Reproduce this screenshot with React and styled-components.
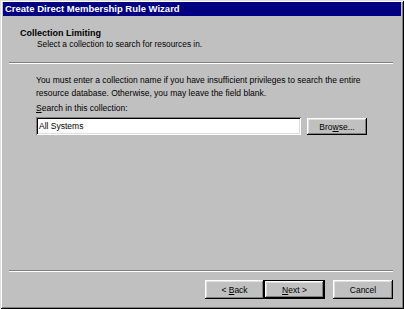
import React from "react";
import styled, { createGlobalStyle } from "styled-components";

const GlobalStyle = createGlobalStyle`
  html, body {
    margin: 0;
    padding: 0;
    background: #c0c0c0;
  }
  body {
    font-family: "Liberation Sans", Arial, sans-serif;
    font-size: 8.5px;
    color: #000;
  }
`;

const Window = styled.div`
  box-sizing: border-box;
  width: 404px;
  height: 309px;
  display: flex;
  flex-direction: column;
  background: #c0c0c0;
  padding: 2px 3px 3px 3px;
  box-shadow: inset 1px 1px #dfdfdf, inset -1px -1px #000,
    inset 2px 2px #fff, inset -2px -2px #808080;
`;

const TitleBar = styled.div`
  height: 14px;
  background: #000080;
  color: #fff;
  font-weight: bold;
  font-size: 9.5px;
  line-height: 14px;
  padding-left: 2px;
  white-space: nowrap;
`;

const Header = styled.div`
  height: 46px;
  box-sizing: border-box;
  padding: 12px 0 0 17px;
`;

const HeaderTitle = styled.div`
  font-weight: bold;
  font-size: 9px;
  line-height: 11px;
`;

const HeaderSub = styled.div`
  font-size: 8.3px;
  line-height: 11px;
  padding-left: 17px;
`;

const Etched = styled.div`
  height: 0;
  margin: 0 8px 0 6px;
  border-top: 1px solid #808080;
  border-bottom: 1px solid #fff;
`;

const Body = styled.div`
  flex: 1;
  padding: 10px 33px 0 33px;
`;

const Para = styled.p`
  margin: 0;
  line-height: 13px;
`;

const Label = styled.div`
  margin-top: 2px;
  line-height: 13px;
`;

const FieldRow = styled.div`
  display: flex;
  align-items: flex-start;
  gap: 6px;
  margin-top: 2px;
`;

const TextBox = styled.div`
  box-sizing: border-box;
  width: 265px;
  height: 18px;
  background: #fff;
  padding: 0 3px;
  line-height: 18px;
  box-shadow: inset 1px 1px #808080, inset -1px -1px #fff,
    inset 2px 2px #000, inset -2px -2px #dfdfdf;
`;

const Button = styled.button`
  box-sizing: border-box;
  width: ${(p) => p.w || 60}px;
  height: ${(p) => p.h || 19}px;
  margin-top: ${(p) => p.mt || 0}px;
  padding: 0;
  border: ${(p) => (p.primary ? "1px solid #000" : "none")};
  background: #c0c0c0;
  font-family: "Liberation Sans", Arial, sans-serif;
  font-size: 8.5px;
  color: #000;
  box-shadow: inset -1px -1px #000, inset 1px 1px #fff,
    inset -2px -2px #808080, inset 2px 2px #dfdfdf;
  u {
    text-decoration: underline;
  }
`;

const Footer = styled.div`
  display: flex;
  justify-content: flex-end;
  gap: 8px;
  padding: 8px 8px 0 0;
  height: 34px;
  box-sizing: border-box;
`;

const NavPair = styled.div`
  display: flex;
`;

export default function App() {
  return (
    <>
      <GlobalStyle />
      <Window>
        <TitleBar>Create Direct Membership Rule Wizard</TitleBar>
        <Header>
          <HeaderTitle>Collection Limiting</HeaderTitle>
          <HeaderSub>Select a collection to search for resources in.</HeaderSub>
        </Header>
        <Etched />
        <Body>
          <Para>
            You must enter a collection name if you have insufficient privileges to search the entire
            <br />
            resource database. Otherwise, you may leave the field blank.
          </Para>
          <Label>
            <u>S</u>earch in this collection:
          </Label>
          <FieldRow>
            <TextBox>All Systems</TextBox>
            <Button mt={1} h={17}>
              Bro<u>w</u>se...
            </Button>
          </FieldRow>
        </Body>
        <Etched />
        <Footer>
          <NavPair>
            <Button w={59}>
              &lt; <u>B</u>ack
            </Button>
            <Button w={61} primary>
              <u>N</u>ext &gt;
            </Button>
          </NavPair>
          <Button>Cancel</Button>
        </Footer>
      </Window>
    </>
  );
}
